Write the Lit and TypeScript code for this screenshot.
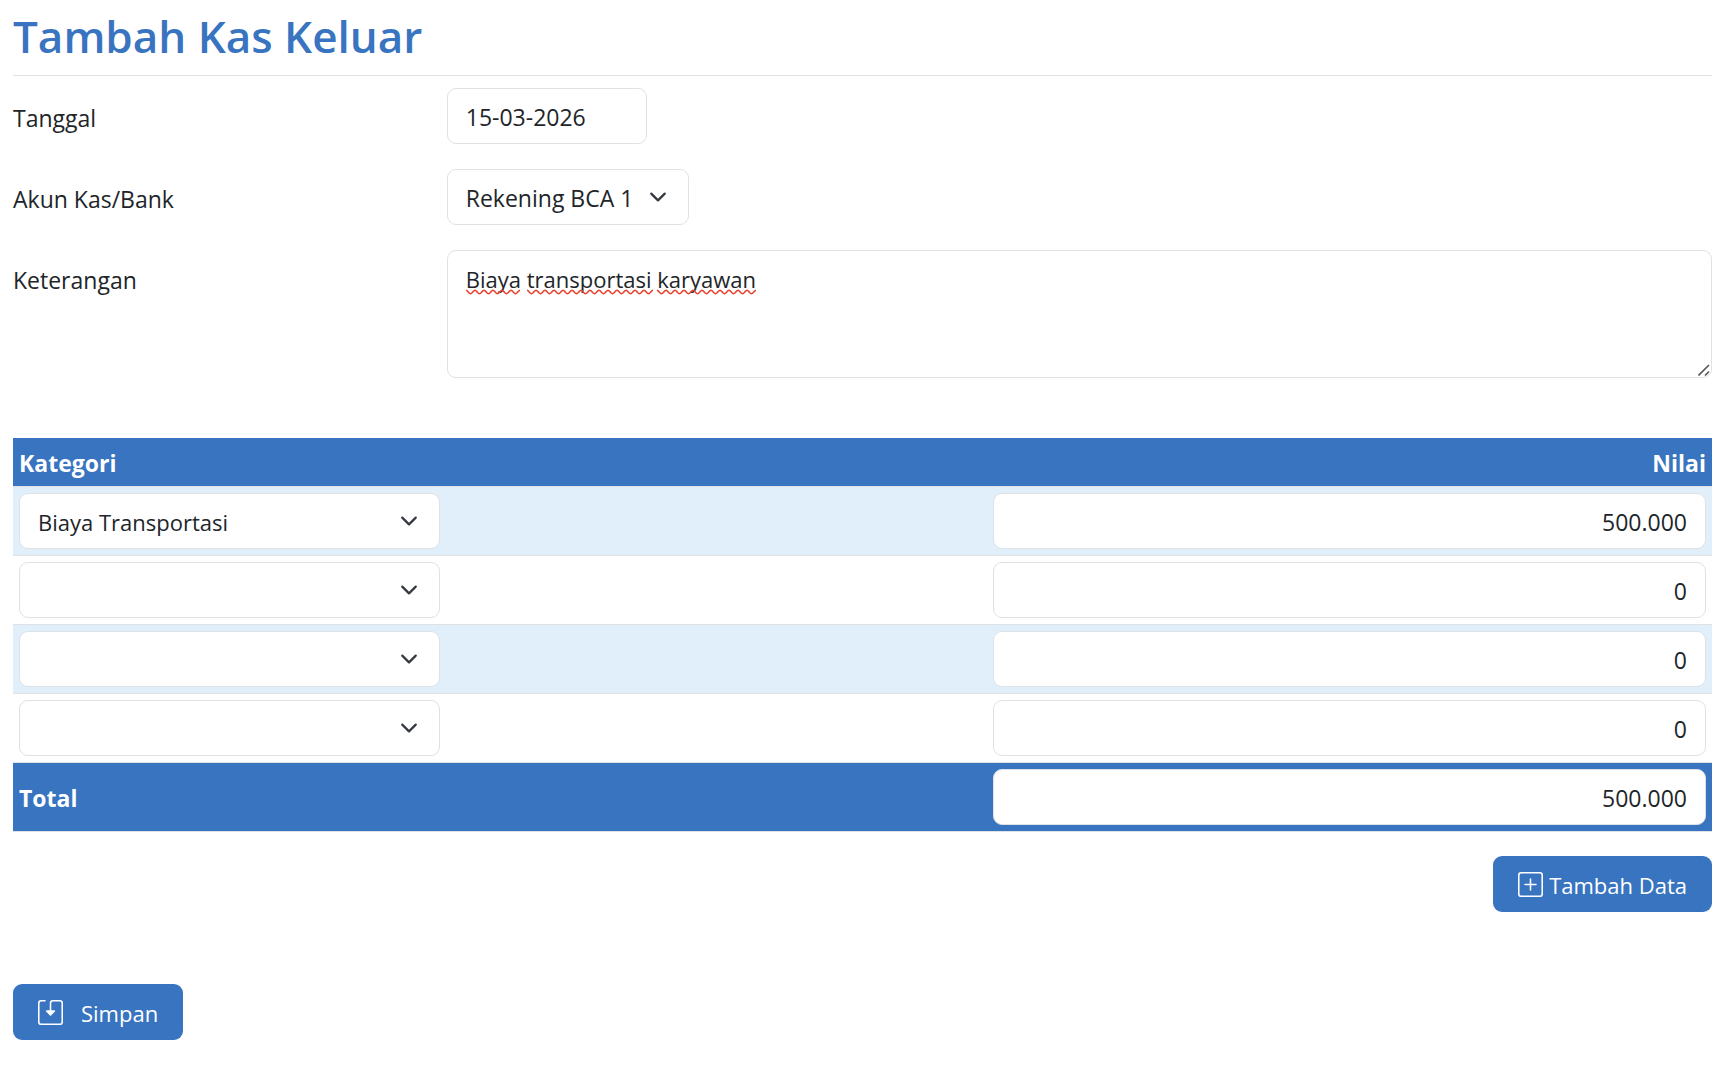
import { LitElement, html, svg, css } from "lit";
import { customElement, property, state } from "lit/decorators.js";

interface Entry {
  kategori: string;
  nilai: string;
}

const NOTE_FONT = '22px "Open Sans", "Noto Sans", sans-serif';

/** Wavy line that is drawn below a word. */
function wave(width: number): string {
  const half = 4.5;
  let d = "M0 1.2";
  let down = true;
  for (let x = 0; x + half <= width + 3; x += half, down = !down) {
    const from = down ? 1.2 : 4.8;
    const to = down ? 4.8 : 1.2;
    d += ` C${x + 1.6} ${from} ${x + half - 1.6} ${to} ${x + half} ${to}`;
  }
  return d;
}

@customElement("select-field")
export class SelectField extends LitElement {
  @property() value = "";
  @property() label = "";
  @property({ attribute: false }) options: string[] = [];

  static styles = css`
    :host {
      display: block;
    }
    .wrap {
      display: grid;
      grid-template-columns: 1fr auto;
      align-items: center;
    }
    .select {
      grid-area: 1 / 1 / 2 / 3;
      width: 100%;
      height: 56px;
      box-sizing: border-box;
      appearance: none;
      margin: 0;
      padding: 2px 54px 0 18px;
      border: 1px solid #dee2e6;
      border-radius: 9px;
      background: #fff;
      color: #212529;
      font: inherit;
    }
    .arrow {
      grid-area: 1 / 2 / 2 / 3;
      width: 18px;
      height: 18px;
      margin-right: 22px;
      pointer-events: none;
    }
  `;

  render() {
    return html`<div class="wrap">
      <select class="select" aria-label=${this.label}>
        ${this.options.map((o) => html`<option ?selected=${o === this.value}>${o}</option>`)}
      </select>
      <svg class="arrow" viewBox="0 0 16 16" aria-hidden="true">
        <path fill="none" stroke="#343a40" stroke-linecap="round" stroke-linejoin="round" stroke-width="2" d="m2 5 6 6 6-6" />
      </svg>
    </div>`;
  }
}

@customElement("app-root")
export class AppRoot extends LitElement {
  @state() private entries: Entry[] = [
    { kategori: "Biaya Transportasi", nilai: "500.000" },
    { kategori: "", nilai: "0" },
    { kategori: "", nilai: "0" },
    { kategori: "", nilai: "0" },
  ];
  @state() private keterangan = "Biaya transportasi karyawan";

  static styles = css`
    :host {
      display: block;
      color: #212529;
      font: 23px/36px "Open Sans", "Noto Sans", sans-serif;
    }
    .page {
      padding: 7px 14px 40px 13px;
    }
    .title {
      margin: 0;
      padding-bottom: 10px;
      border-bottom: 1px solid #dee2e6;
      color: #3874c0;
      font-size: 44px;
      line-height: 58px;
      font-weight: 600;
    }
    .fields {
      display: grid;
      grid-template-columns: minmax(0, 1fr) minmax(0, 3fr);
      gap: 25px 12px;
      padding-top: 12px;
      align-items: start;
      justify-items: start;
    }
    .label {
      padding-top: 12px;
    }
    .input {
      box-sizing: border-box;
      height: 56px;
      margin: 0;
      padding: 2px 18px 0;
      border: 1px solid #dee2e6;
      border-radius: 9px;
      background: #fff;
      color: inherit;
      font: inherit;
    }
    .date {
      width: 200px;
    }
    .note {
      position: relative;
      width: 100%;
    }
    .area {
      display: block;
      width: 100%;
      height: 128px;
      padding: 10px 18px;
      font-size: 22px;
      resize: vertical;
    }
    .area::-webkit-resizer {
      background: transparent;
    }
    .marks {
      position: absolute;
      left: 19px;
      top: 39px;
      width: 60%;
      height: 6px;
      pointer-events: none;
    }
    .grip {
      position: absolute;
      right: 2px;
      bottom: 2px;
      width: 12px;
      height: 12px;
      pointer-events: none;
    }
    .table {
      width: 100%;
      margin-top: 60px;
      border-collapse: separate;
      border-spacing: 0;
      table-layout: fixed;
    }
    .table th,
    .table td {
      box-sizing: border-box;
      padding: 6px;
      border-bottom: 1px solid #dee2e6;
      text-align: left;
      vertical-align: middle;
    }
    .bar th,
    .bar td {
      background: #3874c0;
      color: #fff;
    }
    .table .bar th {
      padding: 7px 6px 5px;
      font-weight: 700;
    }
    .table .num {
      text-align: right;
    }
    .table .colvalue {
      width: 42.7%;
      text-align: right;
    }
    .odd td {
      background: #e1effb;
    }
    .category {
      max-width: 421px;
      font-size: 22px;
    }
    .value {
      display: block;
      width: 100%;
      color: #212529;
      text-align: right;
    }
    .actions {
      display: flex;
      justify-content: flex-end;
      padding: 24px 0 72px;
    }
    .button {
      display: flex;
      align-items: center;
      height: 56px;
      padding: 0 25px;
      border: 0;
      border-radius: 9px;
      background: #3874c0;
      color: #fff;
      font: inherit;
      font-size: 22px;
      gap: 6px;
    }
    .save {
      gap: 18px;
    }
    .caption {
      padding-top: 2px;
    }
    .icon {
      width: 25px;
      height: 25px;
      fill: currentColor;
    }
  `;

  private marks() {
    const ctx = document.createElement("canvas").getContext("2d")!;
    ctx.font = NOTE_FONT;
    let start = 0;
    return this.keterangan.split(" ").map((word) => {
      const width = ctx.measureText(word).width;
      const x = Math.round(start);
      start += width + ctx.measureText(" ").width;
      return svg`<path transform="translate(${x} 0)" d=${wave(width)} fill="none" stroke="#e8432e" stroke-width="1.6"/>`;
    });
  }

  render() {
    return html`<main class="page">
      <h1 class="title">Tambah Kas Keluar</h1>
      <form class="form" @submit=${(e: Event) => e.preventDefault()}>
        <div class="fields">
          <label class="label" for="tanggal">Tanggal</label>
          <input class="input date" id="tanggal" type="text" value="15-03-2026" />
          <label class="label" for="akun">Akun Kas/Bank</label>
          <select-field id="akun" label="Akun Kas/Bank" value="Rekening BCA 1" .options=${["Rekening BCA 1"]}></select-field>
          <label class="label" for="keterangan">Keterangan</label>
          <div class="note">
            <textarea
              class="input area"
              id="keterangan"
              spellcheck="false"
              .value=${this.keterangan}
              @input=${(e: Event) => (this.keterangan = (e.target as HTMLTextAreaElement).value)}
            ></textarea>
            <svg class="marks" aria-hidden="true">${this.marks()}</svg>
            <svg class="grip" viewBox="0 0 12 12" aria-hidden="true">
              <path d="M0.5 11.5 L11 1 M7 11.5 L11 7.5" fill="none" stroke="#555" stroke-width="1.6" />
            </svg>
          </div>
        </div>
        <table class="table">
          <thead>
            <tr class="bar">
              <th scope="col">Kategori</th>
              <th scope="col" class="colvalue">Nilai</th>
            </tr>
          </thead>
          <tbody>
            ${this.entries.map(
              (entry, i) => html`<tr class=${i % 2 ? "even" : "odd"}>
                <td>
                  <select-field class="category" label="Kategori" .value=${entry.kategori} .options=${["", "Biaya Transportasi"]}></select-field>
                </td>
                <td><input class="input value" type="text" aria-label="Nilai" .value=${entry.nilai} /></td>
              </tr>`
            )}
          </tbody>
          <tfoot>
            <tr class="bar">
              <th scope="row">Total</th>
              <td><input class="input value" type="text" aria-label="Total" readonly value="500.000" /></td>
            </tr>
          </tfoot>
        </table>
        <div class="actions">
          <button class="button" type="button" @click=${() => (this.entries = [...this.entries, { kategori: "", nilai: "0" }])}>
            <svg class="icon" viewBox="0 0 16 16" aria-hidden="true">
              <path d="M14 1a1 1 0 0 1 1 1v12a1 1 0 0 1-1 1H2a1 1 0 0 1-1-1V2a1 1 0 0 1 1-1zM2 0a2 2 0 0 0-2 2v12a2 2 0 0 0 2 2h12a2 2 0 0 0 2-2V2a2 2 0 0 0-2-2z" />
              <path d="M8 4a.5.5 0 0 1 .5.5v3h3a.5.5 0 0 1 0 1h-3v3a.5.5 0 0 1-1 0v-3h-3a.5.5 0 0 1 0-1h3v-3A.5.5 0 0 1 8 4" />
            </svg>
            <span class="caption">Tambah Data</span>
          </button>
        </div>
        <button class="button save" type="submit">
          <svg class="icon" viewBox="0 0 16 16" aria-hidden="true">
            <path d="M2 1a1 1 0 0 0-1 1v12a1 1 0 0 0 1 1h12a1 1 0 0 0 1-1V2a1 1 0 0 0-1-1H9.5a1 1 0 0 0-1 1v4.5h2a.5.5 0 0 1 .354.854l-2.5 2.5a.5.5 0 0 1-.708 0l-2.5-2.5A.5.5 0 0 1 5.5 6.5h2V2a2 2 0 0 1 2-2H14a2 2 0 0 1 2 2v12a2 2 0 0 1-2 2H2a2 2 0 0 1-2-2V2a2 2 0 0 1 2-2h2.5a.5.5 0 0 1 0 1z" />
          </svg>
          <span class="caption">Simpan</span>
        </button>
      </form>
    </main>`;
  }
}
